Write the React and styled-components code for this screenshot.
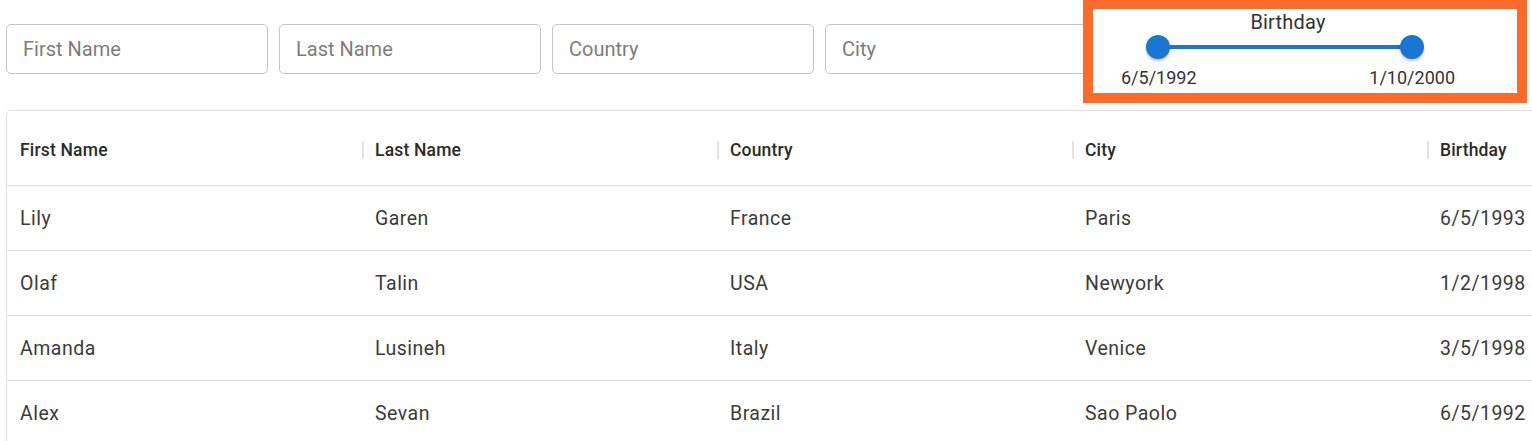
import React from "react";
import styled, { createGlobalStyle } from "styled-components";

const Global = createGlobalStyle`
  html, body { margin: 0; padding: 0; background: #fff; overflow: hidden; }
  body { font-family: Roboto, "Liberation Sans", Arial, sans-serif; }
`;

const Page = styled.div`
  position: relative;
  width: 1532px;
  height: 441px;
  overflow: hidden;
  padding: 24px 0 0 6px;
  box-sizing: border-box;
`;

const FilterRow = styled.div`
  display: flex;
  gap: 11px;
`;

const Input = styled.input`
  box-sizing: border-box;
  width: 262px;
  height: 50px;
  border: 1px solid #c4c4c4;
  border-radius: 5px;
  padding: 0 16px;
  font-family: Roboto, sans-serif;
  font-size: 20px;
  color: #222;
  background: #fff;
  outline: none;
  &::placeholder { color: #7d7d7d; opacity: 1; }
`;

const SliderPanel = styled.div`
  position: absolute;
  left: 1083px;
  top: -1px;
  width: 444px;
  height: 104px;
  box-sizing: border-box;
  border: 10px solid #fd6a2b;
  background: #fff;
  padding: 1px 0 0 28px;
`;

const SliderTitle = styled.div`
  width: 334px;
  text-align: center;
  font-size: 20px;
  line-height: 24px;
  color: #333;
  letter-spacing: 0.01em;
`;

const Track = styled.div`
  position: relative;
  margin: 11px 0 0 37px;
  width: 254px;
  height: 4px;
  background: #1976d2;
  border-radius: 2px;
`;

const Thumb = styled.span`
  position: absolute;
  top: 50%;
  left: ${(p) => p.$at};
  width: 24px;
  height: 24px;
  margin: -12px 0 0 -12px;
  border-radius: 50%;
  background: #1976d2;
  box-shadow: 0 2px 3px rgba(0, 0, 0, 0.25);
`;

const ValueRow = styled.div`
  display: flex;
  justify-content: space-between;
  width: 334px;
  margin-top: 18px;
  font-size: 18px;
  line-height: 22px;
  color: #333;
`;

const Table = styled.div`
  margin-top: 36px;
  border: 1px solid #e0e0e0;
  border-right: none;
  border-bottom: none;
  border-radius: 5px 0 0 0;
  width: 1800px;
`;

const Row = styled.div`
  display: grid;
  grid-template-columns: repeat(5, 355px);
  height: ${(p) => (p.$head ? "74px" : "64px")};
  border-bottom: 1px solid #e0e0e0;
`;

const Cell = styled.div`
  position: relative;
  display: flex;
  align-items: center;
  padding: ${(p) => (p.$head ? "4px 13px 0" : "0 13px")};
  font-size: ${(p) => (p.$head ? "17.5px" : "19.5px")};
  font-weight: ${(p) => (p.$head ? 500 : 400)};
  color: ${(p) => (p.$head ? "#2b2b2b" : "#3b3b3b")};
  letter-spacing: ${(p) => (p.$head ? "0.01em" : "0.025em")};
  white-space: nowrap;
`;

const Separator = styled.span`
  position: absolute;
  right: -2px;
  top: 50%;
  width: 2px;
  height: 18px;
  margin-top: -7px;
  background: #e3e3e3;
`;

const columns = ["First Name", "Last Name", "Country", "City", "Birthday"];
const rows = [
  ["Lily", "Garen", "France", "Paris", "6/5/1993"],
  ["Olaf", "Talin", "USA", "Newyork", "1/2/1998"],
  ["Amanda", "Lusineh", "Italy", "Venice", "3/5/1998"],
  ["Alex", "Sevan", "Brazil", "Sao Paolo", "6/5/1992"],
];

export default function App() {
  return (
    <Page>
      <Global />
      <FilterRow>
        <Input placeholder="First Name" />
        <Input placeholder="Last Name" />
        <Input placeholder="Country" />
        <Input placeholder="City" />
      </FilterRow>
      <SliderPanel>
        <SliderTitle>Birthday</SliderTitle>
        <Track>
          <Thumb $at="0%" />
          <Thumb $at="100%" />
        </Track>
        <ValueRow>
          <span>6/5/1992</span>
          <span>1/10/2000</span>
        </ValueRow>
      </SliderPanel>
      <Table>
        <Row $head>
          {columns.map((c, i) => (
            <Cell $head key={c}>
              {c}
              {i < columns.length - 1 && <Separator />}
            </Cell>
          ))}
        </Row>
        {rows.map((r) => (
          <Row key={r[0]}>
            {r.map((v, i) => (
              <Cell key={i}>{v}</Cell>
            ))}
          </Row>
        ))}
      </Table>
    </Page>
  );
}
